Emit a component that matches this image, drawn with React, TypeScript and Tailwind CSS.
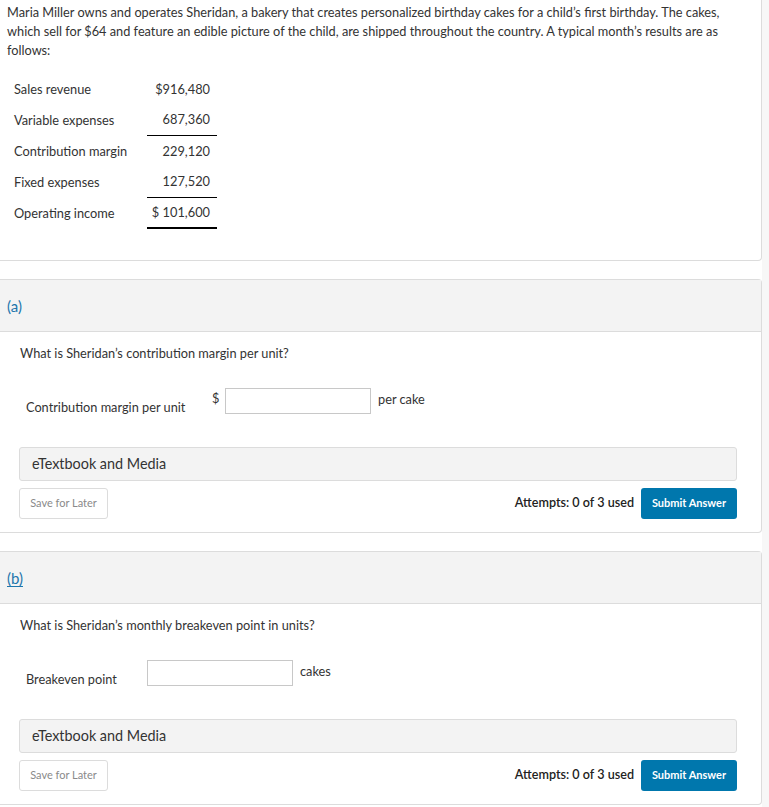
import React from 'react';

const font = { fontFamily: 'Lato, "Noto Sans", sans-serif' };

const rows = [
  { label: 'Sales revenue', value: '$916,480', line: '' },
  { label: 'Variable expenses', value: '687,360', line: 'border-b border-black' },
  { label: 'Contribution margin', value: '229,120', line: '' },
  { label: 'Fixed expenses', value: '127,520', line: 'border-b border-black' },
  { label: 'Operating income', value: '$ 101,600', line: 'border-b-2 border-black' },
];

type PartProps = {
  tag: string;
  underline?: boolean;
  question: string;
  label: string;
  prefix?: string;
  unit: string;
  inputX: string;
};

const Part: React.FC<PartProps> = ({ tag, underline, question, label, prefix, unit, inputX }) => (
  <div className="mt-[18px] border border-l-0 border-[#dcdcdc] rounded-r-[4px] bg-white">
    <div className="h-[52px] bg-[#f3f3f3] border-b border-[#dcdcdc] flex items-center pl-[7px] pt-[1px]">
      <span className={`text-[15px] text-[#1e76ac] ${underline ? 'underline underline-offset-2' : ''}`}>{tag}</span>
    </div>
    <div className="pl-[20px] pt-[12px] text-[12.75px] text-[#333] leading-[18px]">{question}</div>
    <div className="flex items-start mt-[26px] h-[35px] text-[12.75px] text-[#333]">
      <div className="pl-[26px] pt-[10px] leading-[18px]" style={{ width: inputX }}>
        {label}
      </div>
      {prefix && <div className="pt-[1px] -ml-[13px] w-[13px] leading-[18px]">{prefix}</div>}
      <div className="w-[146px] h-[26px] border border-[#c8c8c8] bg-white" />
      <div className="ml-[7px] leading-[18px] pt-[2px]">{unit}</div>
    </div>
    <div className="ml-[19px] mr-[24px] mt-[24px] h-[34px] bg-[#f3f3f3] border border-[#dcdcdc] rounded-[3px] flex items-center pl-[12px] text-[14.4px] text-[#333]">
      eTextbook and Media
    </div>
    <div className="flex items-center justify-between ml-[19px] mr-[24px] mt-[7px] mb-[13px]">
      <button className="w-[89px] h-[31px] border border-[#dcdcdc] rounded-[3px] bg-white text-[11px] text-[#8a8a8a]">
        Save for Later
      </button>
      <div className="flex items-center gap-[7px]">
        <span className="text-[12.6px] font-semibold text-[#222]">Attempts: 0 of 3 used</span>
        <button className="w-[96px] h-[31px] rounded-[3px] bg-[#0077ad] text-white text-[11px] font-bold">
          Submit Answer
        </button>
      </div>
    </div>
  </div>
);

export default function App() {
  return (
    <div className="flex w-[769px] min-h-[807px] bg-white" style={font}>
      <div className="w-[762px]">
        <div className="border border-t-0 border-l-0 border-[#dcdcdc] rounded-br-[4px] bg-white pt-[3px] pb-[31px]">
          <p className="px-[7px] text-[12.75px] leading-[19px] text-[#333]">
            Maria Miller owns and operates Sheridan, a bakery that creates personalized birthday cakes for a child’s first birthday. The cakes,
            which sell for $64 and feature an edible picture of the child, are shipped throughout the country. A typical month’s results are as
            follows:
          </p>
          <div className="mt-[14px] ml-[14px] text-[12.8px] text-[#333]">
            {rows.map((r) => (
              <div key={r.label} className="flex h-[31px]">
                <div className="w-[133px] flex items-center">{r.label}</div>
                <div className={`w-[70px] flex items-center justify-end pr-[7px] ${r.line}`}>{r.value}</div>
              </div>
            ))}
          </div>
        </div>
        <Part
          tag="(a)"
          question="What is Sheridan’s contribution margin per unit?"
          label="Contribution margin per unit"
          prefix="$"
          unit="per cake"
          inputX="225px"
        />
        <Part
          tag="(b)"
          underline
          question="What is Sheridan’s monthly breakeven point in units?"
          label="Breakeven point"
          unit="cakes"
          inputX="147px"
        />
      </div>
      <div className="flex-1 bg-[#f7f7f7]" />
    </div>
  );
}
